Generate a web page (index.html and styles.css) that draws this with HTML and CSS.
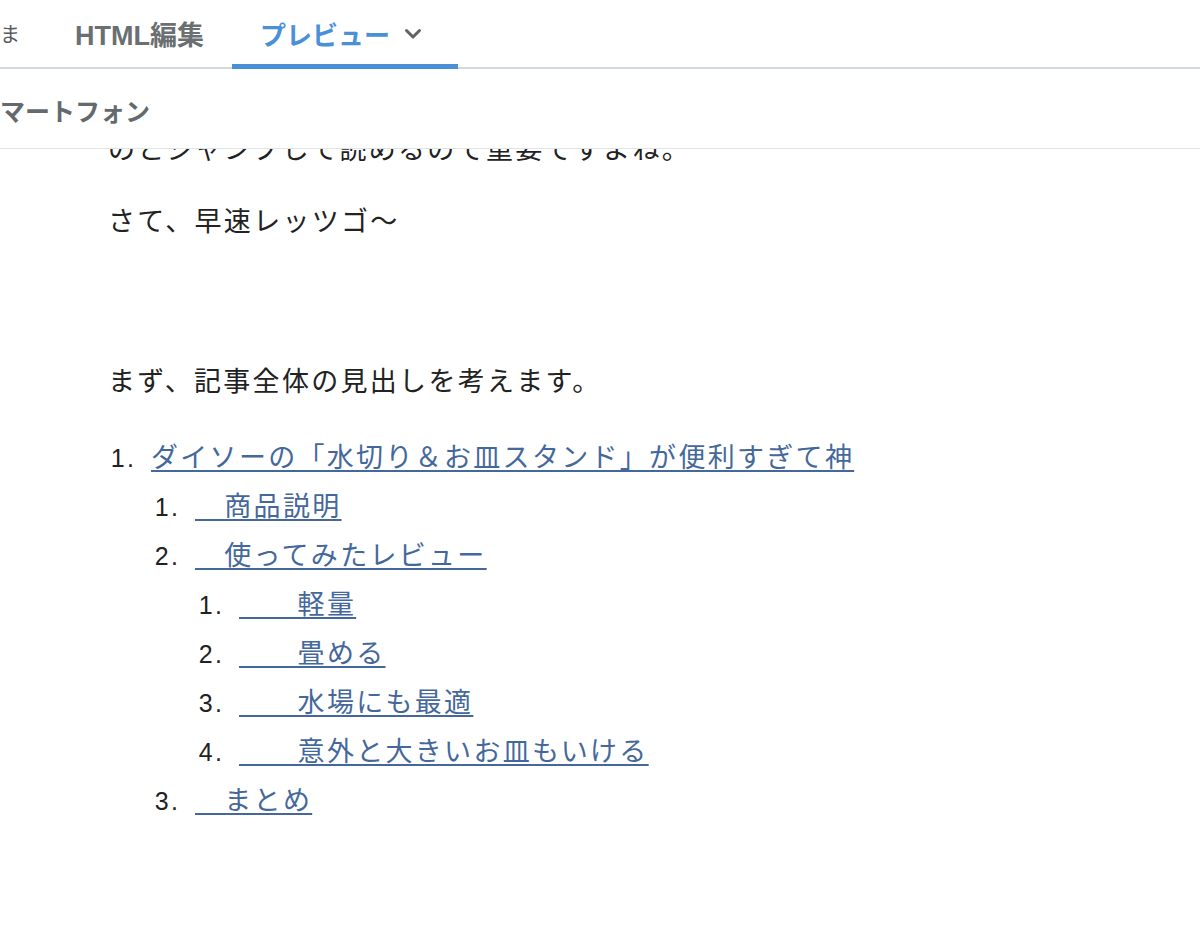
FILE: index.html
```html
<!DOCTYPE html>
<html lang="ja">
<head>
<meta charset="utf-8">
<title>プレビュー</title>
<link rel="stylesheet" href="styles.css">
</head>
<body>
<div class="tabs">
  <div class="tab tab-cut">ま</div>
  <div class="tab tab-html">HTML編集</div>
  <div class="tab tab-active">プレビュー
    <svg class="chev" width="18" height="12" viewBox="0 0 18 12"><path d="M2.5 2.5 L9 9 L15.5 2.5" fill="none" stroke="#5f6366" stroke-width="3" stroke-linecap="round" stroke-linejoin="round"/></svg>
  </div>
</div>
<div class="device">マートフォン</div>
<main class="content">
  <p class="clipped">のとジャンプして読めるので重要ですよね。</p>
  <p>さて、早速レッツゴ〜</p>
  <div class="spacer"></div>
  <p>まず、記事全体の見出しを考えます。</p>
  <ol class="toc">
    <li><a href="#">ダイソーの「水切り＆お皿スタンド」が便利すぎて神</a>
      <ol>
        <li><a href="#">　商品説明</a></li>
        <li><a href="#">　使ってみたレビュー</a>
          <ol>
            <li><a href="#">　　軽量</a></li>
            <li><a href="#">　　畳める</a></li>
            <li><a href="#">　　水場にも最適</a></li>
            <li><a href="#">　　意外と大きいお皿もいける</a></li>
          </ol>
        </li>
        <li><a href="#">　まとめ</a></li>
      </ol>
    </li>
  </ol>
</main>
</body>
</html>
```
FILE: styles.css
```css
html, body {
  margin: 0;
  padding: 0;
  background: #ffffff;
}
body {
  font-family: "Noto Sans CJK JP", "Noto Sans", sans-serif;
  color: #222222;
  width: 1200px;
  height: 926px;
  overflow: hidden;
}
.tabs {
  display: flex;
  align-items: stretch;
  height: 67px;
  border-bottom: 2px solid #d3d9dd;
}
.tab {
  display: flex;
  align-items: center;
  font-family: "Liberation Sans", "Noto Sans CJK JP", sans-serif;
  font-weight: bold;
  font-size: 27px;
  color: #6a6f72;
  padding-bottom: 1px;
  box-sizing: border-box;
}
.tab-cut {
  font-weight: normal;
  font-size: 20px;
  color: #555a5d;
  width: 75px;
}
.tab-html {
  width: 157px;
}
.tab-active {
  color: #4a90d9;
  font-size: 26px;
  padding-left: 28px;
  width: 226px;
  border-bottom: 5px solid #4a90d9;
  margin-bottom: -2px;
  padding-top: 3px;
  padding-bottom: 0;
}
.chev {
  margin-left: 14px;
  margin-top: 0;
}
.device {
  height: 80px;
  display: flex;
  align-items: center;
  font-family: "Noto Sans CJK JP", sans-serif;
  font-weight: bold;
  font-size: 25px;
  color: #63696c;
  border-bottom: 1px solid #dfe4e7;
  box-sizing: border-box;
  padding-top: 2px;
}
.content {
  height: 777px;
  overflow: hidden;
  padding-left: 108px;
  font-size: 27px;
  letter-spacing: 2.3px;
}
.content p {
  margin: 0 0 23px;
  line-height: 49px;
}
.content p.clipped {
  margin-top: -26px;
}
.spacer {
  height: 88px;
}
.toc {
  margin: 27px 0 0;
  padding-left: 43px;
  line-height: 49px;
}
.toc ol {
  margin: 0;
  padding-left: 44px;
}
.toc li::marker {
  content: counter(list-item) ".\2002";
  font-family: "Liberation Sans", sans-serif;
  font-size: 25px;
  color: #222222;
}
.toc a {
  color: #45689c;
  text-decoration: underline;
  text-decoration-thickness: 1.5px;
  text-underline-offset: 3px;
}
```
